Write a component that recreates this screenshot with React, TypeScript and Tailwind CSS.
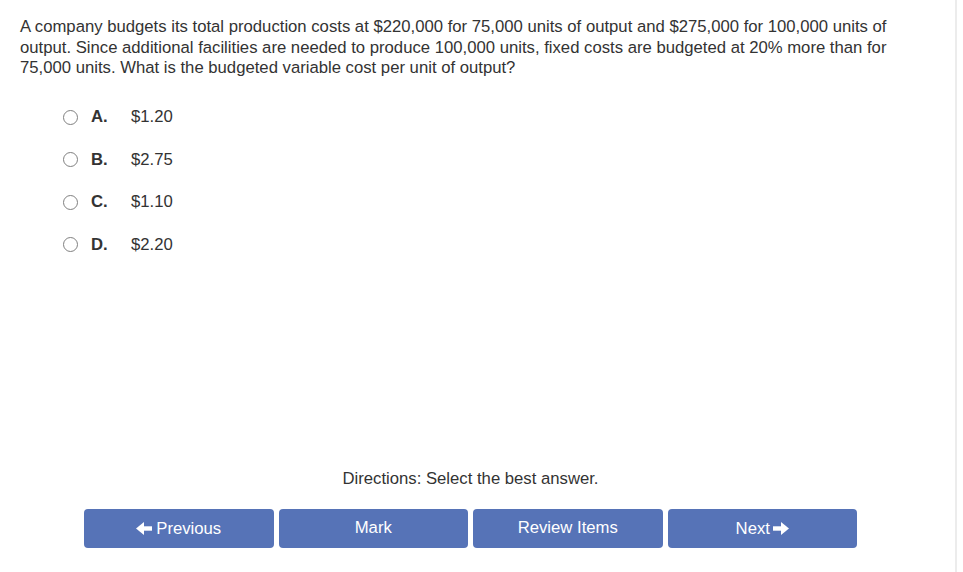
const options = [
  { letter: "A.", value: "$1.20" },
  { letter: "B.", value: "$2.75" },
  { letter: "C.", value: "$1.10" },
  { letter: "D.", value: "$2.20" },
];

function Arrow({ left }: { left?: boolean }) {
  return (
    <svg
      width="16"
      height="13"
      viewBox="0 0 16 13"
      className={left ? "rotate-180" : ""}
      fill="currentColor"
    >
      <rect x="0" y="4.3" width="9" height="4.4" />
      <polygon points="8,0 16,6.5 8,13" />
    </svg>
  );
}

export default function App() {
  return (
    <div
      className="flex h-[572px] w-[963px] bg-white text-[#333] text-[16.7px]"
      style={{ fontFamily: '"Liberation Sans", Arial, sans-serif' }}
    >
      <div className="flex w-[955px] flex-col">
        {/* Question */}
        <p className="pl-[20px] pr-[40px] pt-[17px] leading-[20.5px]">
          A company budgets its total production costs at $220,000 for 75,000 units of output and
          $275,000 for 100,000 units of output. Since additional facilities are needed to produce
          100,000 units, fixed costs are budgeted at 20% more than for 75,000 units. What is the
          budgeted variable cost per unit of output?
        </p>

        {/* Options */}
        <div className="mt-[29px] flex flex-col gap-[23.5px] pl-[63px]">
          {options.map((o) => (
            <label key={o.letter} className="flex h-[19px] items-center">
              <span className="h-[15px] w-[15px] rounded-full border-[1.5px] border-[#808080] bg-white" />
              <span className="ml-[13px] w-[40px] font-bold">{o.letter}</span>
              <span>{o.value}</span>
            </label>
          ))}
        </div>

        <div className="flex-1" />

        {/* Footer */}
        <div className="flex w-[941px] flex-col items-center pb-[24px]">
          <p className="leading-[19px]">Directions: Select the best answer.</p>
          <div className="mt-[21px] grid w-[773px] grid-cols-4 gap-[5px]">
            <button className="flex h-[39px] items-center justify-center gap-[4px] rounded-[4px] bg-[#5673b7] text-white">
              <Arrow left />
              Previous
            </button>
            <button className="flex h-[39px] items-center justify-center rounded-[4px] bg-[#5673b7] pb-[2px] text-white">
              Mark
            </button>
            <button className="flex h-[39px] items-center justify-center rounded-[4px] bg-[#5673b7] pb-[2px] text-white">
              Review Items
            </button>
            <button className="flex h-[39px] items-center justify-center gap-[3px] rounded-[4px] bg-[#5673b7] text-white">
              Next
              <Arrow />
            </button>
          </div>
        </div>
      </div>
      <div className="h-full w-[2px] bg-[#ececec]" />
    </div>
  );
}
